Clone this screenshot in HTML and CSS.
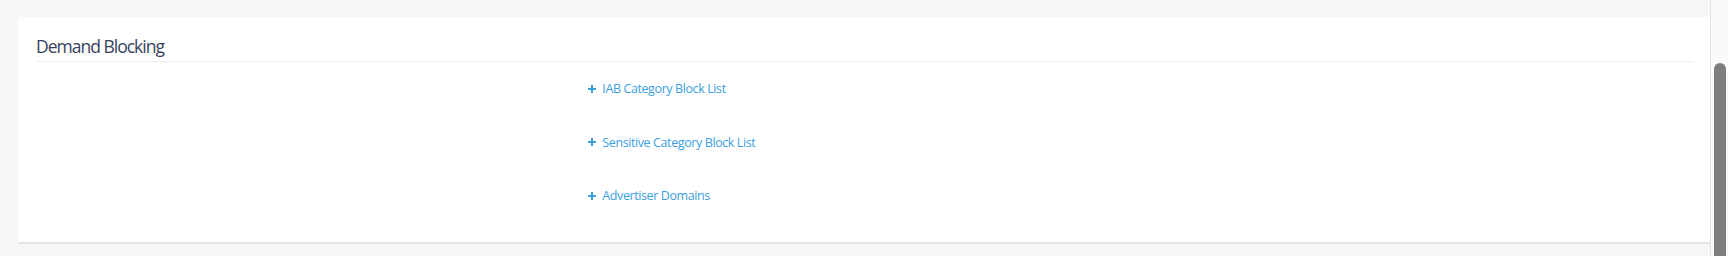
FILE: index.html
```html
<!DOCTYPE html>
<html>
<head>
    <link rel="stylesheet" href="styles.css">
</head>
<body>
<div class="page">
    <div class="main">
        <div class="card">
            <h3 class="card-title">Demand Blocking</h3>
            <div class="block-lists">
                <div class="block-row">
                    <a href="#" class="add-link">
                        <svg class="plus" width="8" height="8" viewBox="0 0 8 8"><path d="M4 0V8M0 4H8" stroke="currentColor" stroke-width="2"/></svg>
                        IAB Category Block List
                    </a>
                </div>
                <div class="block-row">
                    <a href="#" class="add-link">
                        <svg class="plus" width="8" height="8" viewBox="0 0 8 8"><path d="M4 0V8M0 4H8" stroke="currentColor" stroke-width="2"/></svg>
                        Sensitive Category Block List
                    </a>
                </div>
                <div class="block-row">
                    <a href="#" class="add-link">
                        <svg class="plus" width="8" height="8" viewBox="0 0 8 8"><path d="M4 0V8M0 4H8" stroke="currentColor" stroke-width="2"/></svg>
                        Advertiser Domains
                    </a>
                </div>
            </div>
        </div>
    </div>
    <div class="scrollbar">
        <div class="scroll-thumb"></div>
    </div>
</div>
</body>
</html>
```

FILE: styles.css
```css
html, body {
    margin: 0;
    height: 256px;
    overflow: hidden;
}
body {
    background-color: #f6f7f9;
    font-family: "Open Sans", Arial, sans-serif;
}
.page {
    display: flex;
    height: 256px;
}
.main {
    flex: 1;
    padding: 17px 0 0 18px;
}
.card {
    background-color: white;
    box-shadow: 0 2px 0 #e2e4e8;
    padding: 18px 17px 19px 18px;
}
.card-title {
    margin: 0;
    padding-bottom: 3px;
    font-size: 17.5px;
    font-weight: normal;
    letter-spacing: -1px;
    line-height: 23px;
    color: #36425c;
    border-bottom: 1px solid #eceef1;
}
.block-lists {
    margin-left: 33.333%;
}
.block-row {
    display: flex;
    padding: 18px 0;
}
.add-link {
    display: flex;
    align-items: center;
    gap: 6px;
    height: 17.5px;
    line-height: 17.5px;
    color: #3c9fe0;
    font-size: 12.5px;
    letter-spacing: -0.4px;
    text-decoration: none;
}
.plus {
    display: block;
}
.scrollbar {
    width: 18px;
    border-left: 1px solid #e4e4e4;
    background-color: #fafafa;
    padding: 63px 2px 0 3px;
    box-sizing: border-box;
}
.scroll-thumb {
    height: 100%;
    background-color: #7e7e7e;
    border-radius: 7px 7px 0 0;
}
```
